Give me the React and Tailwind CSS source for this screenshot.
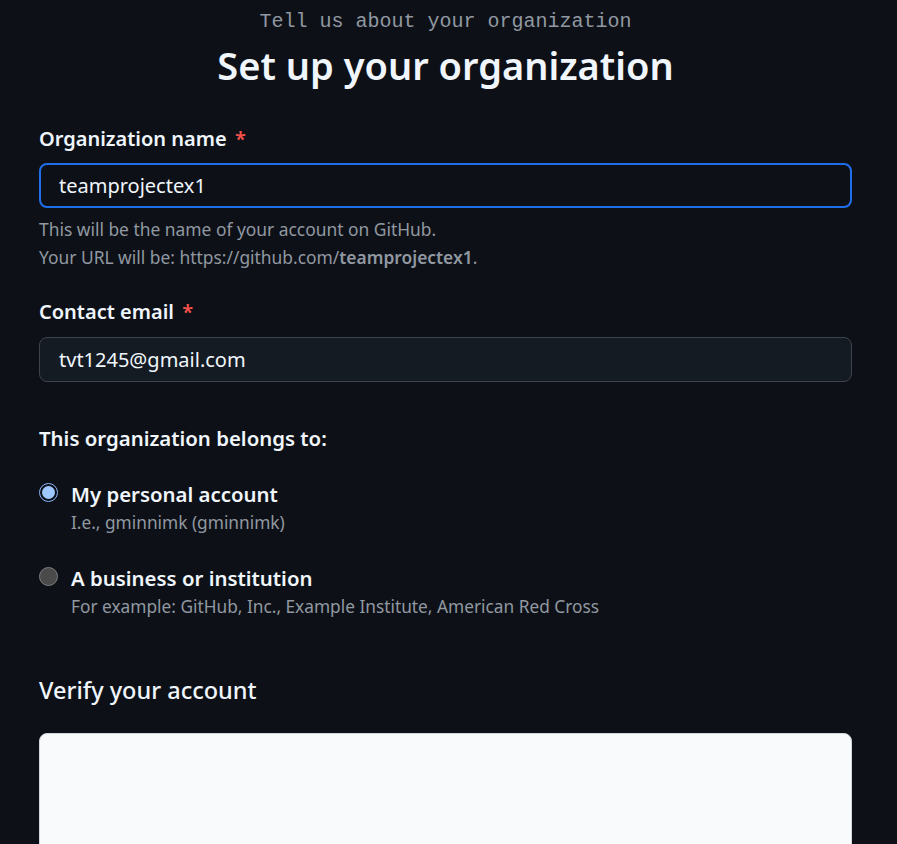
export default function App() {
  const sans = { fontFamily: '"Segoe UI", "Noto Sans", "Open Sans", sans-serif' };
  return (
    <div className="h-[844px] bg-[#0d1117] text-[#f0f6fc] overflow-hidden" style={sans}>
      <div className="ml-[39px] w-[813px] flex flex-col">
        <p
          className="text-center text-[20px] leading-[26px] mt-[9px] text-[#9198a1] font-['Liberation_Mono','DejaVu_Sans_Mono',monospace]"
        >
          Tell us about your organization
        </p>
        <h1 className="text-center text-[38px] leading-[52px] font-semibold mt-[4px]">
          Set up your organization
        </h1>

        <div className="mt-[34px] flex flex-col">
          <label className="text-[20px] leading-[28px] font-semibold">
            Organization name <span className="text-[#f85149] ml-[3px]">*</span>
          </label>
          <div className="mt-[10px] h-[45px] rounded-[8px] border-2 border-[#1f6feb] bg-[#0d1117] flex items-center pl-[18px] text-[20px]">
            teamprojectex1
          </div>
          <div className="mt-[7px] text-[17.4px] leading-[28px] text-[#9198a1]">
            <p>This will be the name of your account on GitHub.</p>
            <p>
              Your URL will be: https://github.com/<span className="font-semibold">teamprojectex1</span>.
            </p>
          </div>
        </div>

        <div className="mt-[27px] flex flex-col">
          <label className="text-[20px] leading-[28px] font-semibold">
            Contact email <span className="text-[#f85149] ml-[3px]">*</span>
          </label>
          <div className="mt-[11px] h-[45px] rounded-[8px] border border-[#3d444d] bg-[#151b23] flex items-center pl-[19px] text-[20px]">
            tvt1245@gmail.com
          </div>
        </div>

        <p className="mt-[42px] text-[20.4px] leading-[28px] font-semibold">This organization belongs to:</p>

        <div className="mt-[28px] flex gap-[13px]">
          <div className="mt-[3px] w-[19px] h-[19px] rounded-full border-[1.5px] border-[#8ab4f8] bg-[#0d1117] flex items-center justify-center shrink-0">
            <div className="w-[13px] h-[13px] rounded-full bg-[#9ec8ff]" />
          </div>
          <div className="flex flex-col">
            <span className="text-[20.4px] leading-[28px] font-semibold">My personal account</span>
            <span className="text-[17.3px] leading-[24px] mt-[3px] text-[#9198a1]">I.e., gminnimk (gminnimk)</span>
          </div>
        </div>

        <div className="mt-[29px] flex gap-[13px]">
          <div className="mt-[3px] w-[19px] h-[19px] rounded-full border-[1.5px] border-[#7d7d7d] bg-[#4a4a4a] shrink-0" />
          <div className="flex flex-col">
            <span className="text-[20.4px] leading-[28px] font-semibold">A business or institution</span>
            <span className="text-[17.3px] leading-[24px] mt-[3px] text-[#9198a1]">
              For example: GitHub, Inc., Example Institute, American Red Cross
            </span>
          </div>
        </div>

        <h2 className="mt-[55px] text-[23.5px] leading-[32px] font-medium">Verify your account</h2>

        <div className="mt-[27px] h-[200px] rounded-[8px] bg-[#f9fafb] border border-[#d0d7de]" />
      </div>
    </div>
  );
}
